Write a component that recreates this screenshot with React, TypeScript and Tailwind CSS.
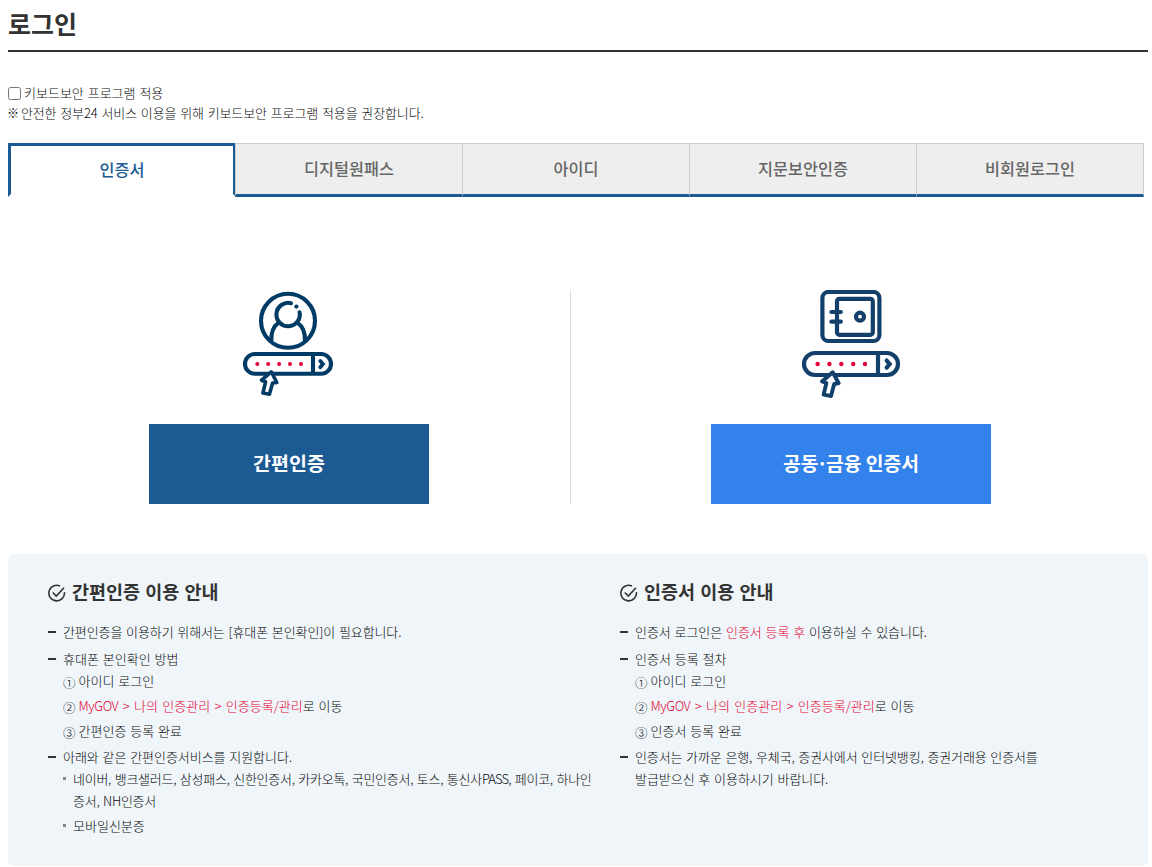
import type { ReactNode } from 'react';

const TABS = ['디지털원패스', '아이디', '지문보안인증', '비회원로그인'];

function SimpleAuthIcon() {
  return (
    <svg className="block" width="98" height="110" viewBox="240 290 98 110" fill="none" stroke="#003b66" strokeWidth="4.1">
      <circle cx="288" cy="320.8" r="27" />
      <path d="M291 303.2A11.7 11.7 0 1 0 299.6 312.3" strokeLinecap="round" />
      <circle cx="296.4" cy="306.6" r="2.1" fill="#003b66" stroke="none" />
      <path d="M278.7 322.6Q270.8 328 271.3 341M297.3 322.6Q305.4 328 305 341" />
      <rect x="245" y="354" width="86" height="19.8" rx="9.9" />
      <path d="M313 354v20" />
      <path d="M320.3 361l2.6 3-2.6 3.2" strokeWidth="3.8" strokeLinecap="round" />
      <g fill="#e6003c" stroke="none">
        <circle cx="257.3" cy="364" r="2" />
        <circle cx="268.2" cy="364" r="2" />
        <circle cx="279.1" cy="364" r="2" />
        <circle cx="290" cy="364" r="2" />
        <circle cx="301" cy="364" r="2" />
      </g>
      <path
        d="M271.3 371.8L276.8 382.5L272.6 383L269.4 394.3L262.9 393L265.6 381.8L261.5 380.2Z"
        fill="#fff"
        strokeWidth="3.6"
        strokeLinejoin="round"
      />
    </svg>
  );
}

function CertIcon() {
  return (
    <svg className="block" width="100" height="110" viewBox="801 290 100 110" fill="none" stroke="#13406b" strokeWidth="4.2">
      <rect x="822.4" y="292" width="57" height="49" rx="6" />
      <rect x="837" y="298.8" width="35.8" height="36" rx="2.5" />
      <path d="M831.4 312h9.4M831.4 321.7h9.4" strokeLinecap="round" />
      <circle cx="860" cy="316.7" r="4" />
      <rect x="804" y="353" width="94" height="22" rx="11" />
      <path d="M878 353v22" />
      <path d="M886.7 360.6l3 3.4-3 3.6" strokeLinecap="round" />
      <g fill="#e6003c" stroke="none">
        <circle cx="817.6" cy="364" r="2.2" />
        <circle cx="829.4" cy="364" r="2.2" />
        <circle cx="841.3" cy="364" r="2.2" />
        <circle cx="853.2" cy="364" r="2.2" />
        <circle cx="865" cy="364" r="2.2" />
      </g>
      <path
        d="M832.7 372.2L838.7 383.2L834.2 384L831 396L823.6 394.6L826.4 383L822 381.4Z"
        fill="#fff"
        strokeWidth="3.9"
        strokeLinejoin="round"
      />
    </svg>
  );
}

function CheckIcon() {
  return (
    <svg width="18" height="18" viewBox="0 0 18 18" fill="none" stroke="#333" strokeWidth="1.6">
      <path d="M12 2A7.8 7.8 0 1 0 16.4 8.1" />
      <path d="M4.8 8.5l3.5 3.5L16 3.7" />
    </svg>
  );
}

function GuideTitle({ children }: { children: ReactNode }) {
  return (
    <h2 className="flex h-7 items-center gap-[6px] text-[18.5px] font-bold text-[#333] [word-spacing:1px]">
      <CheckIcon />
      <span className="relative -top-0.5">{children}</span>
    </h2>
  );
}

function Item({ children }: { children: ReactNode }) {
  return (
    <li className="flex">
      <span className="mt-[10px] mr-[7px] h-0.5 w-2 shrink-0 bg-[#333]" />
      <div className="min-w-0 flex-1">{children}</div>
    </li>
  );
}

function Step({ no, children }: { no: string; children: ReactNode }) {
  return (
    <li className="flex gap-[3px]">
      <span className="relative top-0.5 w-[12.5px] text-[12.5px]">{no}</span>
      <span>{children}</span>
    </li>
  );
}

function SubItem({ children }: { children: ReactNode }) {
  return (
    <li className="flex">
      <span className="mt-[9px] mr-[7px] size-[3px] shrink-0 bg-[#888]" />
      <div>{children}</div>
    </li>
  );
}

function MyGovPath() {
  return (
    <>
      <span className="text-[#e60030] [word-spacing:1.5px]">
        <span className="tracking-[-0.4px]">MyGOV</span> &gt; 나의 인증관리 &gt; 인증등록/관리
      </span>
      로 이동
    </>
  );
}

export default function App() {
  return (
    <div className="h-[867px] overflow-hidden bg-white pr-1 pl-2 font-['Noto_Sans_CJK_KR',sans-serif] text-[13px] font-light text-[#080808] [word-spacing:1px]">
      <h1 className="h-[52px] w-[1140px] border-b-2 border-[#333] pt-[3px] text-[25px] leading-[40px] font-bold text-[#333]">로그인</h1>

      <div className="mt-[31px] leading-5">
        <label className="flex h-5 items-center gap-[3px]">
          <input type="checkbox" className="m-0 size-[13px]" />
          키보드보안 프로그램 적용
        </label>
        <p className="h-5 whitespace-nowrap">
          <span className="mr-[-2px] -ml-px text-[12px]">※</span>{' '}
          <span className="tracking-[-0.1px]">안전한 정부24 서비스 이용을 위해 키보드보안 프로그램 적용을 권장합니다.</span>
        </p>
      </div>

      <ul className="mt-5 flex h-[54px] w-[1140px] text-center text-[16.3px]">
        <li className="w-[228px] border-[3px] border-[#1c5a93] border-b-transparent leading-[46px] font-medium text-[#1c5a93]">
          인증서
        </li>
        {TABS.map((tab) => (
          <li
            key={tab}
            className="-ml-px w-[228px] border border-b-[3px] border-[#ccc] border-b-[#1c5a93] bg-[#eee] leading-[48px] font-medium text-[#666]"
          >
            {tab}
          </li>
        ))}
      </ul>

      <div className="mt-[93px] flex h-[214px]">
        <div className="flex w-[563px] flex-col items-center justify-between border-r border-[#ddd]">
          <SimpleAuthIcon />
          <button className="h-20 w-[280px] bg-[#1c5a93] pb-0.5 text-[19.5px] font-bold text-white">간편인증</button>
        </div>
        <div className="flex w-[560px] flex-col items-center justify-between">
          <CertIcon />
          <button className="h-20 w-[280px] bg-[#3381ea] pb-0.5 text-[19.3px] font-bold text-white">
            공동<span className="mx-[-2px]">·</span>금융 인증서
          </button>
        </div>
      </div>

      <div className="mt-[50px] flex h-[312px] w-[1140px] rounded-md bg-[#eff5f9] pt-[25px] pl-10 leading-[22px]">
        <section className="w-[572px] pr-6">
          <GuideTitle>간편인증 이용 안내</GuideTitle>
          <ul className="mt-[14px]">
            <Item>
              <span className="tracking-[-0.1px]">간편인증을 이용하기 위해서는 [휴대폰 본인확인]이 필요합니다.</span>
            </Item>
            <li className="h-[5px]" />
            <Item>
              휴대폰 본인확인 방법
              <ol className="space-y-[3px]">
                <Step no="①">아이디 로그인</Step>
                <Step no="②">
                  <MyGovPath />
                </Step>
                <Step no="③">간편인증 등록 완료</Step>
              </ol>
            </Item>
            <li className="h-1" />
            <Item>
              <span className="tracking-[-0.05px]">아래와 같은 간편인증서비스를 지원합니다.</span>
              <ul className="space-y-[3px] whitespace-nowrap">
                <SubItem>
                  <span className="tracking-[-0.26px]">
                    네이버, 뱅크샐러드, 삼성패스, 신한인증서, 카카오톡, 국민인증서, 토스, 통신사
                    <span className="tracking-[-0.9px]">PASS</span>, 페이코, 하나인
                    <br />
                    증서, NH인증서
                  </span>
                </SubItem>
                <SubItem>모바일신분증</SubItem>
              </ul>
            </Item>
          </ul>
        </section>

        <section>
          <GuideTitle>인증서 이용 안내</GuideTitle>
          <ul className="mt-[14px]">
            <Item>
              <span className="tracking-[-0.05px]">
                인증서 로그인은 <span className="text-[#e60030]">인증서 등록 후</span> 이용하실 수 있습니다.
              </span>
            </Item>
            <li className="h-[5px]" />
            <Item>
              인증서 등록 절차
              <ol className="space-y-[3px]">
                <Step no="①">아이디 로그인</Step>
                <Step no="②">
                  <MyGovPath />
                </Step>
                <Step no="③">인증서 등록 완료</Step>
              </ol>
            </Item>
            <li className="h-1" />
            <Item>
              <span className="tracking-[-0.12px]">
                인증서는 가까운 은행, 우체국, 증권사에서 인터넷뱅킹, 증권거래용 인증서를
              </span>
              <br />
              <span className="tracking-[-0.05px]">발급받으신 후 이용하시기 바랍니다.</span>
            </Item>
          </ul>
        </section>
      </div>
    </div>
  );
}
